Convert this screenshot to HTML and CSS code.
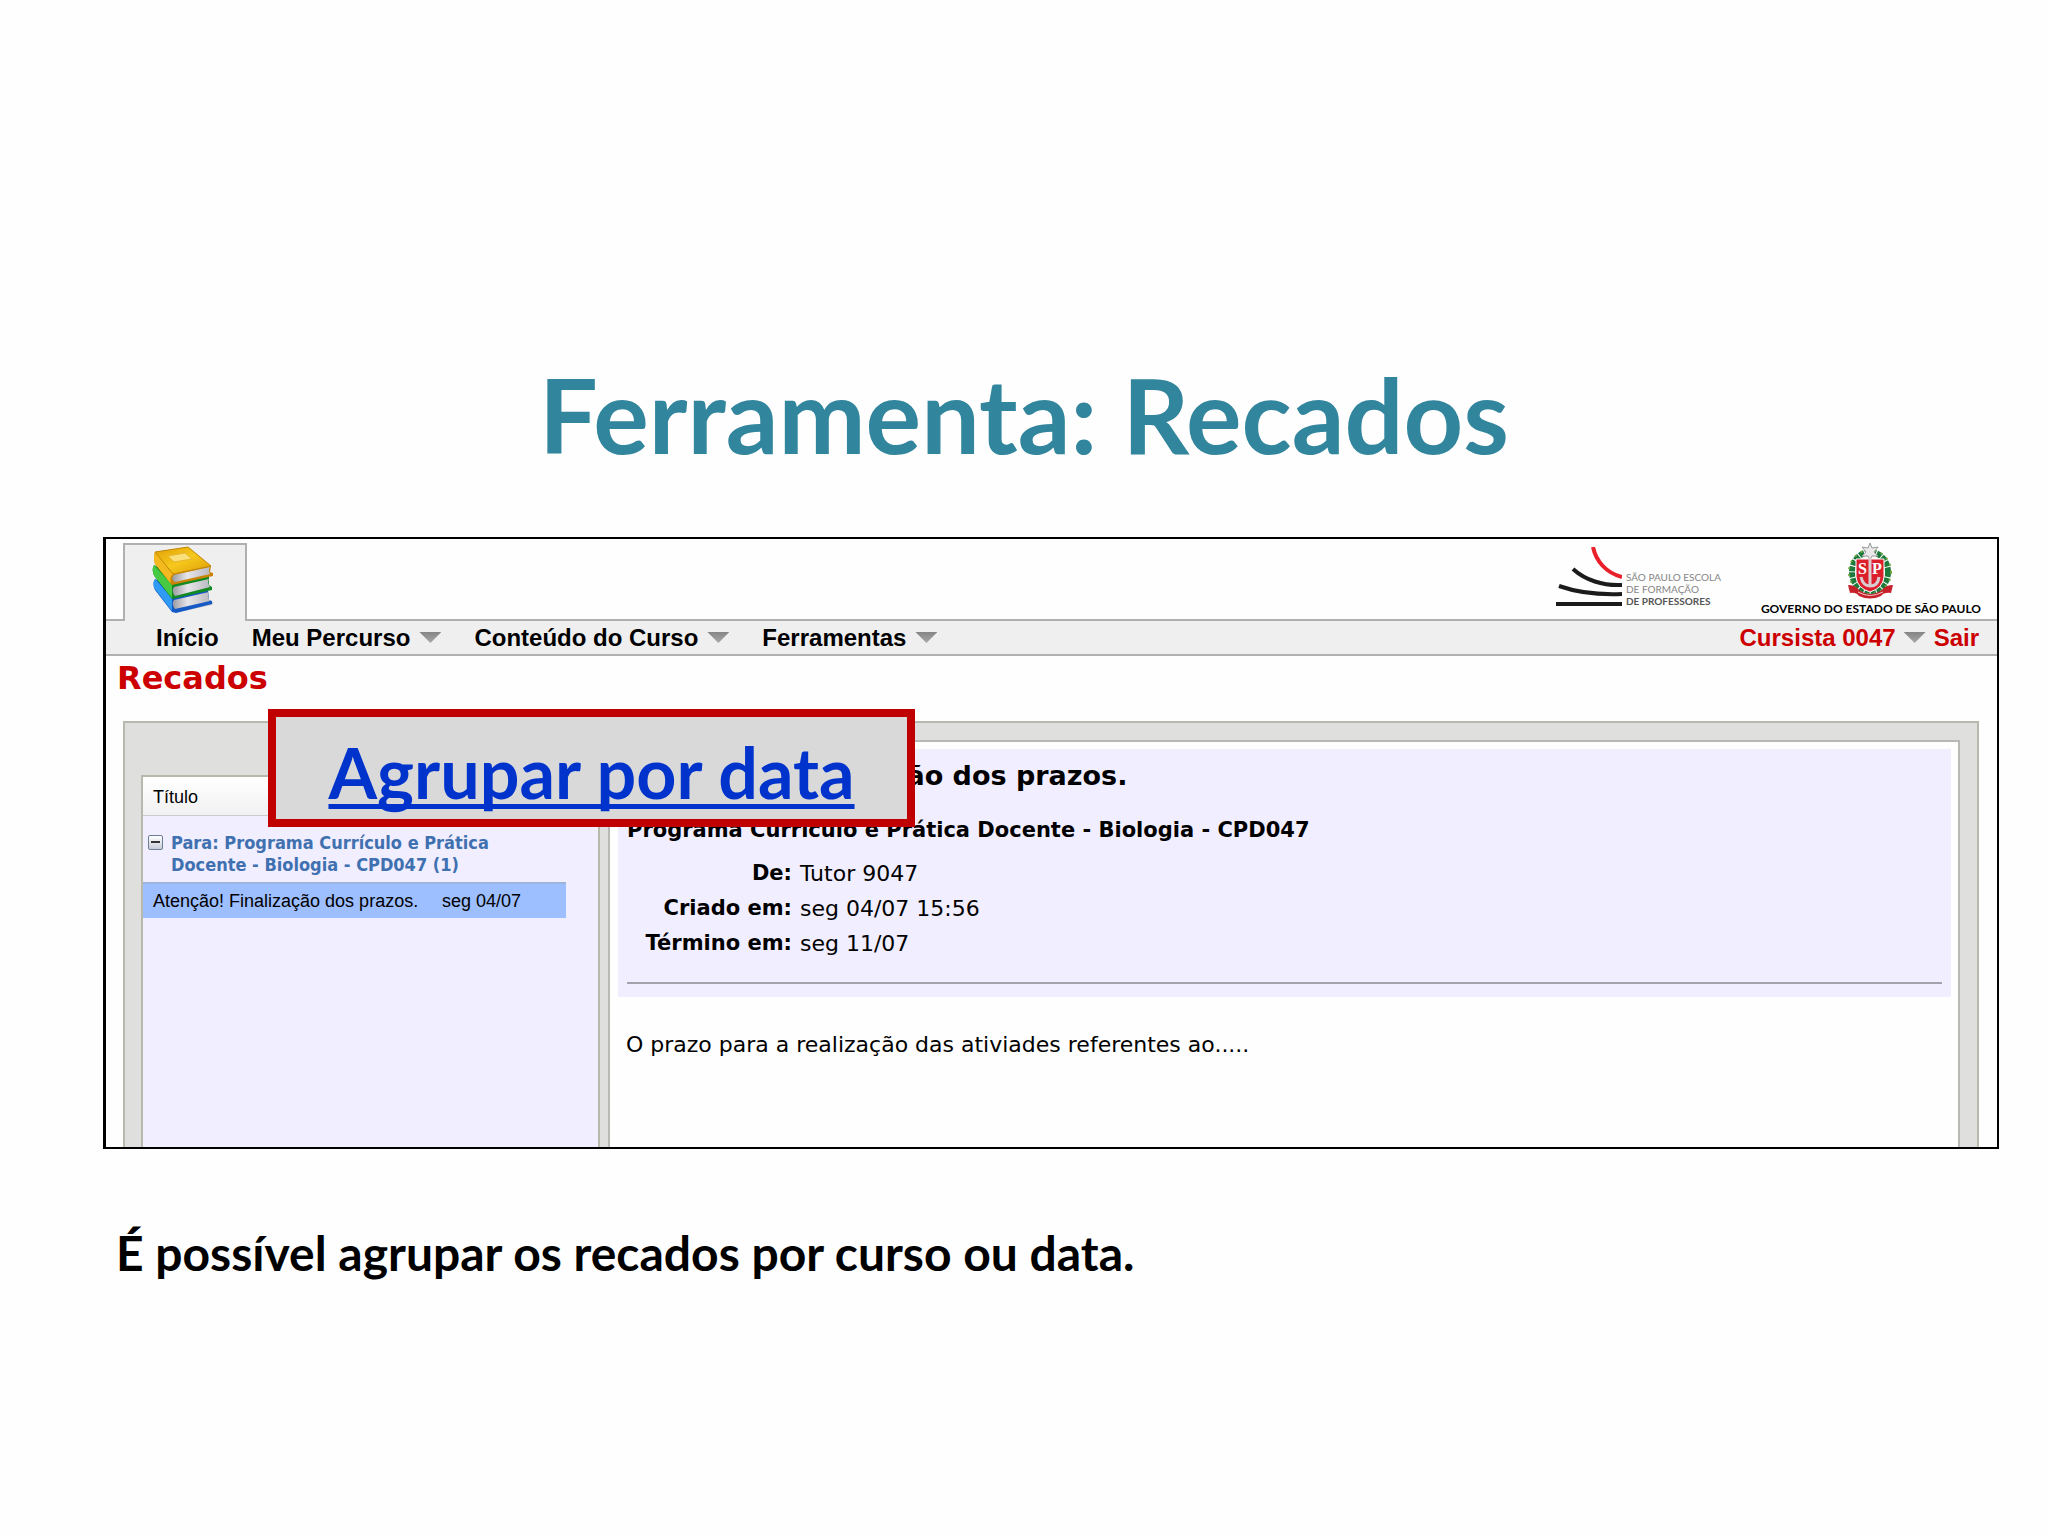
FILE: index.html
```html
<!DOCTYPE html>
<html lang="pt-BR">
<head>
<meta charset="utf-8">
<title>Ferramenta: Recados</title>
<link rel="stylesheet" href="styles.css">
</head>
<body>
<main class="slide">
  <h1 class="slide-title">Ferramenta: Recados</h1>

  <section class="frame">
    <header class="header">
      <div class="tab">
        <svg class="books" viewBox="0 0 64 70" width="64" height="70" aria-hidden="true">
          <defs>
            <linearGradient id="gold" x1="0" y1="0" x2="1" y2="1"><stop offset="0" stop-color="#e0a008"/><stop offset=".5" stop-color="#f6c81c"/><stop offset="1" stop-color="#dd9c05"/></linearGradient>
            <linearGradient id="page" x1="0" y1="0" x2="1" y2="0"><stop offset="0" stop-color="#9a9aa2"/><stop offset=".4" stop-color="#e6e6ea"/><stop offset="1" stop-color="#b9b9c0"/></linearGradient>
          </defs>
          <path d="M22 67 L60 59 L62 56 L40 62Z" fill="#c9c9c9"/>
          <path d="M3 33 Q0 38 3 44 L20 66 L24 67 L60 58 L60 55 L57 54 L56 44 L20 40Z" fill="#1559c4"/>
          <path d="M3 33 Q0 38 3 43 L20 65 L20 52Z" fill="#2f9bf4"/>
          <path d="M22 54 L57 46 Q55 50 58 55 L23 63 Q19 58 22 54Z" fill="url(#page)"/>
          <path d="M2 19 Q-1 25 3 31 L20 53 L60 44 L60 41 L57 39 V30 L20 28Z" fill="#128a22"/>
          <path d="M2 19 Q-1 25 3 31 L20 52 L20 39Z" fill="#47c942"/>
          <path d="M22 41 L57 33 Q55 37 58 41 L23 50 Q19 45 22 41Z" fill="url(#page)"/>
          <path d="M3 6 Q1 11 3 18 L20 39 L61 30 L61 27 L58 26 L59 20 L36 1Z" fill="#c98407"/>
          <path d="M3 6 Q1 11 3 18 L19 38 Q17 31 21 28Z" fill="#f3b91f"/>
          <path d="M22 29 L58 21 Q56 24 58 28 L23 36 Q18 33 22 29Z" fill="url(#page)"/>
          <path d="M3 6 L36 1 L59 20 L21 28Z" fill="url(#gold)" stroke="#c48a08"/>
          <path d="M16 10 L33 7 L40 13 L22 16Z" fill="#fae07a" stroke="#e6b72c"/>
        </svg>
      </div>
      <div class="logos">
        <div class="school">
          <svg viewBox="0 0 66 62" width="66" height="62" fill="none" stroke-width="4" aria-hidden="true">
            <path d="M37 0 C40 14 50 26 66 30" stroke="#e8202a"/>
            <path d="M17 22 C29 33 47 39 66 38" stroke="#1b1b1b"/>
            <path d="M3 39 C20 45 42 48 66 47" stroke="#1b1b1b"/>
            <path d="M0 57 H66" stroke="#1b1b1b"/>
          </svg>
          <p class="school-name">SÃO PAULO ESCOLA<br>DE FORMAÇÃO<br><b>DE PROFESSORES</b></p>
        </div>
        <div class="state">
          <svg viewBox="0 0 48 56" width="48" height="56" aria-hidden="true">
            <ellipse cx="23" cy="29" rx="18" ry="20" fill="none" stroke="#1c7a3c" stroke-width="6" stroke-dasharray="5 1"/>
            <ellipse cx="23" cy="29" rx="21" ry="22" fill="none" stroke="#6fa53a" stroke-width="2" stroke-dasharray="2 5"/>
            <path d="M9 16 H37 V34 Q36 45 23 49 Q10 45 9 34Z" fill="#dc1f2c" stroke="#fff"/>
            <path d="M23 0 L25 5 L31 4 L27 9 L31 13 L25 13 L23 17 L21 13 L15 13 L19 9 L15 4 L21 5Z" fill="#e9e9e9" stroke="#999"/>
            <path d="M23 14 V43 M14 34 Q16 43 23 43 Q31 43 32 34" fill="none" stroke="#d9cdd0" stroke-width="3"/>
            <text x="11" y="31" class="crest-letter">S</text>
            <text x="25" y="31" class="crest-letter">P</text>
            <path d="M1 42 Q8 42 12 47 Q23 55 35 47 Q39 42 46 42 L44 50 Q37 49 34 53 Q23 58 12 53 Q9 49 3 50Z" fill="#c8202b"/>
            <path d="M11 49 Q23 56 36 49" fill="none" stroke="#efc6c6"/>
          </svg>
          <p class="state-name">GOVERNO DO ESTADO DE SÃO PAULO</p>
        </div>
      </div>
    </header>

    <nav class="menu">
      <a class="menu-link" href="#">Início</a>
      <a class="menu-link has-caret" href="#">Meu Percurso</a>
      <a class="menu-link has-caret" href="#">Conteúdo do Curso</a>
      <a class="menu-link has-caret" href="#">Ferramentas</a>
      <div class="user">
        <a class="menu-link has-caret" href="#">Cursista 0047</a>
        <a class="menu-link" href="#">Sair</a>
      </div>
    </nav>

    <h2 class="page-title">Recados</h2>

    <div class="panel">
      <div class="list">
        <table class="messages">
          <thead>
            <tr><th colspan="3" scope="col">Título</th></tr>
          </thead>
          <tbody>
            <tr>
              <td class="group" colspan="3">
                <div class="group-row">
                  <button class="toggle" type="button" aria-label="Recolher grupo"></button>
                  <span>Para: Programa Currículo e Prática<br>Docente - Biologia - CPD047 (1)</span>
                </div>
              </td>
            </tr>
            <tr class="selected">
              <td class="subject">Atenção! Finalização dos prazos.</td>
              <td class="date">seg 04/07</td>
              <td class="rest"></td>
            </tr>
          </tbody>
        </table>
      </div>

      <article class="message">
        <div class="summary">
          <h3 class="subject-title">Atenção! Finalização dos prazos.</h3>
          <p class="course">Programa Currículo e Prática Docente - Biologia - CPD047</p>
          <dl class="meta">
            <dt>De:</dt><dd>Tutor 9047</dd>
            <dt>Criado em:</dt><dd>seg 04/07 15:56</dd>
            <dt>Término em:</dt><dd>seg 11/07</dd>
          </dl>
          <hr class="rule">
        </div>
        <p class="body-text">O prazo para a realização das ativiades referentes ao.....</p>
      </article>
    </div>

    <div class="callout"><a href="#">Agrupar por data</a></div>
  </section>

  <p class="caption">É possível agrupar os recados por curso ou data.</p>
</main>
</body>
</html>
```
FILE: styles.css
```css
* { box-sizing: border-box; }

body {
  margin: 0;
  background: #fefefe;
  color: #000;
  font-family: "DejaVu Sans", Verdana, sans-serif;
}

h1, h2, h3, p, dl, dd { margin: 0; }

.slide { padding-top: 354px; }

.slide-title {
  color: #31859c;
  font: bold 104px/120px Lato, Calibri, sans-serif;
  text-align: center;
}

.frame {
  position: relative;
  margin: 63px 49px 0 103px;
  border: 2px solid #000;
  border-left-width: 3px;
  background: #fefefe;
}

/* top strip with tab and logos */
.header {
  display: flex;
  justify-content: space-between;
  height: 82px;
  padding-left: 17px;
  border-bottom: 2px solid #b0b0b0;
}

.tab {
  width: 124px;
  height: 78px;
  margin-top: 4px;
  padding: 1px 0 0 27px;
  border: 2px solid #b0b0b0;
  border-bottom: 0;
  background: #efeff0;
}

.books { display: block; }

.logos {
  display: flex;
  gap: 40px;
  padding-right: 16px;
}

.school {
  display: flex;
  gap: 4px;
  padding-top: 8px;
}

.school-name {
  padding-top: 24px;
  color: #858585;
  font: 10px/12px Lato, Arial, sans-serif;
  white-space: nowrap;
}

.school-name b { color: #555; }

.state {
  display: flex;
  flex-direction: column;
  align-items: center;
  padding-top: 4px;
}

.crest-letter {
  fill: #fff;
  font: bold 16px "Liberation Serif", serif;
}

.state-name {
  font: bold 12px/20px Lato, sans-serif;
  white-space: nowrap;
}

.menu {
  display: flex;
  align-items: center;
  gap: 33px;
  height: 35px;
  padding: 0 18px 0 50px;
  border-bottom: 2px solid #b0b0b0;
  background: #efeff0;
}

.menu-link {
  display: flex;
  align-items: center;
  gap: 9px;
  color: #000;
  font: bold 24px/32px "Liberation Sans", Arial, sans-serif;
  text-decoration: none;
  white-space: nowrap;
}

.has-caret::after {
  content: "";
  width: 22px;
  height: 11px;
  background: linear-gradient(#858585, #a8a8a8);
  clip-path: polygon(0 0, 100% 0, 50% 100%);
}

.user {
  display: flex;
  gap: 8px;
  margin-left: auto;
}

.user .menu-link {
  gap: 8px;
  color: #c00;
}

.page-title {
  padding: 3px 0 0 11px;
  color: #c00;
  font-size: 32px;
  line-height: 38px;
}

.panel {
  display: grid;
  grid-template-columns: 459px 1fr;
  gap: 8px;
  min-height: 426px;
  margin: 24px 18px 0 17px;
  padding: 17px 17px 0 16px;
  border: 2px solid #b8b8ac;
  border-bottom: 0;
  background: #dfdfdd;
}

.list {
  margin-top: 35px;
  border: 2px solid #b8b8ac;
  border-bottom: 0;
  background: #f0eeff;
}

.messages {
  width: 100%;
  border-collapse: collapse;
  font: 18px/24px "Liberation Sans", Arial, sans-serif;
}

.messages th {
  height: 38px;
  padding: 2px 10px 0;
  border-bottom: 1px solid #ccc;
  background: linear-gradient(#fff, #f1f1f3);
  font-weight: normal;
  text-align: left;
}

.messages td { padding: 0; }

.messages .group {
  padding: 16px 5px 6px;
  color: #3f70b0;
  font: bold 18px/22px "DejaVu Sans Condensed", Tahoma, sans-serif;
}

.group-row {
  display: flex;
  gap: 8px;
  white-space: nowrap;
}

.toggle {
  flex: none;
  width: 15px;
  height: 15px;
  margin-top: 3px;
  padding: 0 2px;
  border: 1px solid #6c7f96;
  border-radius: 2px;
  background: linear-gradient(#fff, #c8ccd8);
}

.toggle::before {
  content: "";
  display: block;
  height: 2px;
  background: #333;
}

.messages .subject {
  width: 299px;
  height: 35px;
  padding-left: 10px;
  white-space: nowrap;
}

.messages .date { width: 124px; }

.selected .subject,
.selected .date {
  border-top: 2px solid #9db5dc;
  background: #9dbeff;
}

.message {
  padding: 7px 7px 0 8px;
  border: 2px solid #b8b8b4;
  border-bottom: 0;
  background: #fefefe;
}

.summary {
  height: 248px;
  padding: 10px 9px 0;
  background: #f0eeff;
}

.subject-title {
  font-size: 27px;
  line-height: 34px;
}

.course {
  margin-top: 23px;
  font-size: 21px;
  font-weight: bold;
  line-height: 28px;
}

.meta {
  display: grid;
  grid-template-columns: 165px 1fr;
  gap: 0 8px;
  margin-top: 12px;
  font-size: 21px;
  line-height: 35px;
}

.meta dt {
  font-weight: bold;
  text-align: right;
}

.meta dd { font-size: 22px; }

.rule {
  height: 2px;
  margin: 21px 0 0;
  border: 0;
  background: #a3a3ad;
}

.body-text {
  padding: 34px 8px 0;
  font-size: 22px;
  line-height: 28px;
}

/* highlight laid over the message list */
.callout {
  position: absolute;
  top: 170px;
  left: 162px;
  width: 647px;
  height: 118px;
  padding-top: 15px;
  border: 8px solid #c00000;
  background: #d9d9d9;
  text-align: center;
}

.callout a {
  color: #03c;
  font: bold 70px/80px Lato, Calibri, sans-serif;
  text-decoration-thickness: 5px;
  text-underline-offset: 5px;
  text-decoration-skip-ink: none;
}

.caption {
  padding: 76px 116px 0;
  font: bold 48px/56px Lato, Calibri, sans-serif;
}
```
